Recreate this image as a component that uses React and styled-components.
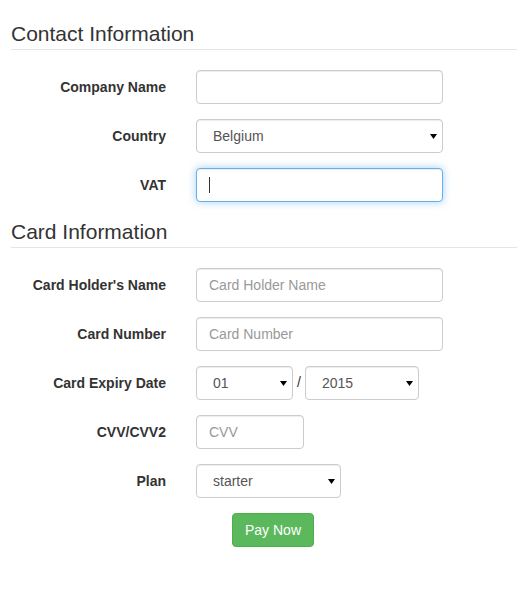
import React from "react";
import styled, { createGlobalStyle, css } from "styled-components";

const GlobalStyle = createGlobalStyle`
  html, body {
    margin: 0;
    padding: 0;
    background: #fff;
    overflow: hidden;
  }
  body {
    font-family: "Liberation Sans", Arial, Helvetica, sans-serif;
    font-size: 14px;
    line-height: 1.42857;
    color: #333;
  }
  * { box-sizing: border-box; }
`;

const Form = styled.form`
  padding: 19px 0 0 11px;
  width: 100%;
`;

const Legend = styled.div`
  font-size: 21px;
  line-height: 30px;
  color: #333;
  border-bottom: 1px solid #e5e5e5;
  margin-bottom: 20px;
`;

const FormGroup = styled.div`
  display: flex;
  align-items: center;
  margin-bottom: 15px;
  min-height: 34px;
`;

const Label = styled.label`
  flex: 0 0 170px;
  width: 170px;
  padding-right: 15px;
  text-align: right;
  font-weight: bold;
  font-size: 14px;
  line-height: 20px;
  color: #333;
`;

const Control = styled.div`
  padding-left: ${(p) => (p.$offset ? 15 + p.$offset : 15)}px;
  display: flex;
  align-items: center;
  position: relative;
`;

const fieldBase = css`
  display: block;
  height: 34px;
  padding: 6px 12px;
  font-family: "Liberation Sans", Arial, Helvetica, sans-serif;
  font-size: 14px;
  line-height: 20px;
  color: #555;
  background: #fff;
  border: 1px solid #ccc;
  border-radius: 4px;
  box-shadow: inset 0 1px 1px rgba(0, 0, 0, 0.075);
  outline: none;
`;

const Input = styled.input`
  ${fieldBase}
  width: ${(p) => p.$w}px;
  &::placeholder { color: #999; opacity: 1; }
  ${(p) =>
    p.$focused &&
    css`
      border-color: #66afe9;
      box-shadow: inset 0 1px 1px rgba(0, 0, 0, 0.075),
        0 0 8px rgba(102, 175, 233, 0.6);
    `}
`;

const Caret = styled.span`
  position: absolute;
  left: 28px;
  top: 9px;
  width: 1px;
  height: 16px;
  background: #333;
`;

const SelectWrap = styled.div`
  position: relative;
  width: ${(p) => p.$w}px;
`;

const Select = styled.select`
  ${fieldBase}
  width: 100%;
  appearance: none;
  -webkit-appearance: none;
  padding-left: 16px;
  padding-right: 20px;
`;

const Arrow = styled.svg`
  position: absolute;
  right: 6px;
  top: 50%;
  margin-top: -2px;
  width: 7px;
  height: 5px;
  pointer-events: none;
`;

const Slash = styled.span`
  margin: 0 4px;
  color: #333;
`;

const Button = styled.button`
  font-family: "Liberation Sans", Arial, Helvetica, sans-serif;
  font-size: 14px;
  line-height: 20px;
  padding: 6px 12px;
  height: 34px;
  color: #fff;
  background: #5cb85c;
  border: 1px solid #4cae4c;
  border-radius: 4px;
  cursor: pointer;
`;

const DropArrow = () => (
  <Arrow viewBox="0 0 7 5">
    <polygon points="0,0 7,0 3.5,5" fill="#000" />
  </Arrow>
);

const SelectField = ({ w, value, options }) => (
  <SelectWrap $w={w}>
    <Select defaultValue={value}>
      {options.map((o) => (
        <option key={o} value={o}>
          {o}
        </option>
      ))}
    </Select>
    <DropArrow />
  </SelectWrap>
);

export default function App() {
  return (
    <>
      <GlobalStyle />
      <Form onSubmit={(e) => e.preventDefault()}>
        <Legend>Contact Information</Legend>
        <FormGroup>
          <Label>Company Name</Label>
          <Control>
            <Input $w={247} type="text" />
          </Control>
        </FormGroup>
        <FormGroup>
          <Label>Country</Label>
          <Control>
            <SelectField w={247} value="Belgium" options={["Belgium", "France", "Germany", "Netherlands"]} />
          </Control>
        </FormGroup>
        <FormGroup>
          <Label>VAT</Label>
          <Control>
            <Input $w={247} $focused type="text" />
            <Caret />
          </Control>
        </FormGroup>

        <Legend>Card Information</Legend>
        <FormGroup>
          <Label>Card Holder's Name</Label>
          <Control>
            <Input $w={247} type="text" placeholder="Card Holder Name" />
          </Control>
        </FormGroup>
        <FormGroup>
          <Label>Card Number</Label>
          <Control>
            <Input $w={247} type="text" placeholder="Card Number" />
          </Control>
        </FormGroup>
        <FormGroup>
          <Label>Card Expiry Date</Label>
          <Control>
            <SelectField w={97} value="01" options={["01", "02", "03", "04", "05", "06", "07", "08", "09", "10", "11", "12"]} />
            <Slash>/</Slash>
            <SelectField w={114} value="2015" options={["2015", "2016", "2017", "2018", "2019", "2020"]} />
          </Control>
        </FormGroup>
        <FormGroup>
          <Label>CVV/CVV2</Label>
          <Control>
            <Input $w={108} type="text" placeholder="CVV" />
          </Control>
        </FormGroup>
        <FormGroup>
          <Label>Plan</Label>
          <Control>
            <SelectField w={145} value="starter" options={["starter", "pro", "business"]} />
          </Control>
        </FormGroup>
        <FormGroup>
          <Label as="span" />
          <Control $offset={36}>
            <Button type="submit">Pay Now</Button>
          </Control>
        </FormGroup>
      </Form>
    </>
  );
}
